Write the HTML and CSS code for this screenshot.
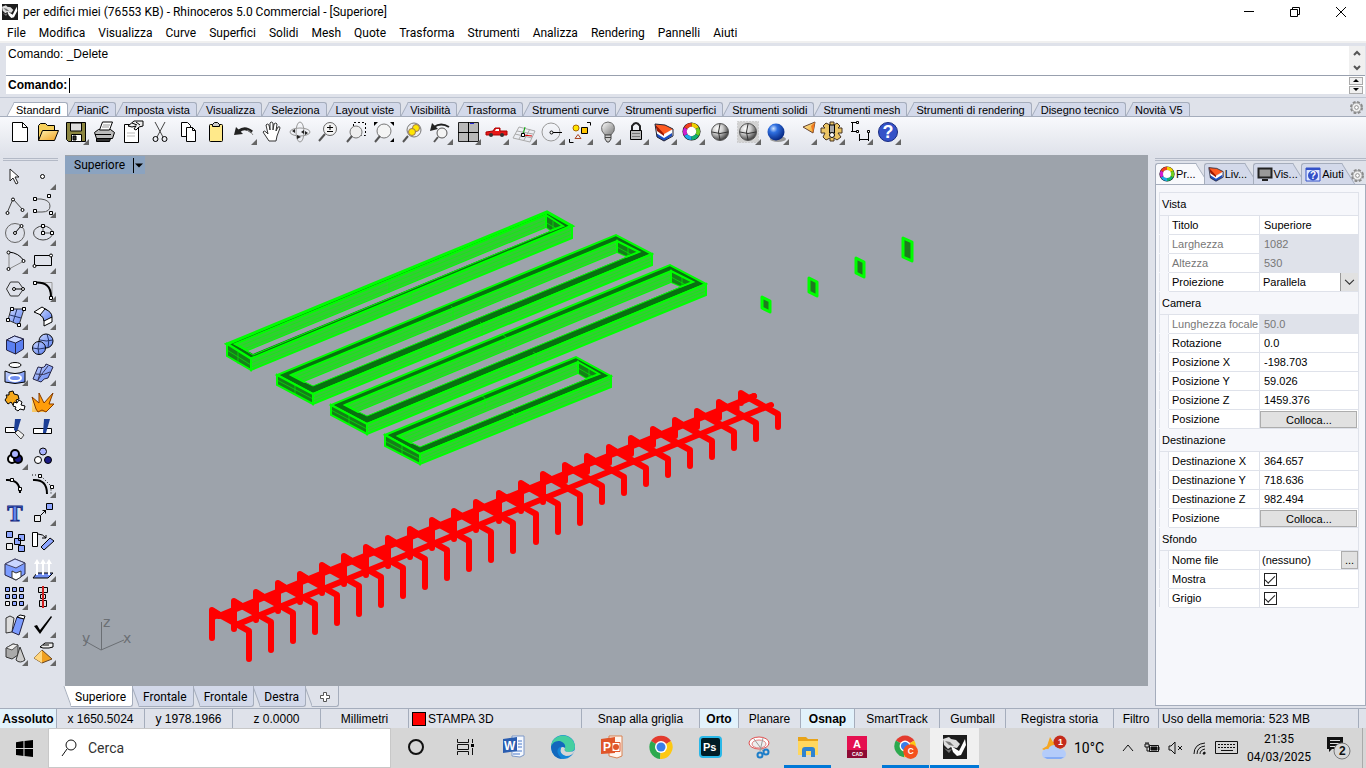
FILE: index.html
```html
<!DOCTYPE html>
<html lang="it">
<head>
    <meta charset="UTF-8">
    <meta name="viewport" content="width=device-width, initial-scale=1.0">
    <title>per edifici miei (76553 KB) - Rhinoceros 5.0 Commercial - [Superiore]</title>
    <link rel="stylesheet" href="styles.css">
</head>
<body>
    <!-- Shared gradients and symbols -->
    <svg class="defs" width="0" height="0" aria-hidden="true">
        <defs>
            <linearGradient id="gold" x1="0" y1="0" x2="1" y2="1"><stop offset="0" stop-color="#fff3b0"/><stop offset="1" stop-color="#f0a020"/></linearGradient>
            <linearGradient id="blue" x1="0" y1="0" x2="1" y2="1"><stop offset="0" stop-color="#c9d6ff"/><stop offset="1" stop-color="#5b7ff0"/></linearGradient>
            <linearGradient id="grey" x1="0" y1="0" x2="1" y2="1"><stop offset="0" stop-color="#fff"/><stop offset="1" stop-color="#777"/></linearGradient>
            <radialGradient id="ballGrey" cx=".35" cy=".3" r=".8"><stop offset="0" stop-color="#fff"/><stop offset=".4" stop-color="#ccc"/><stop offset="1" stop-color="#222"/></radialGradient>
            <radialGradient id="ballBlue" cx=".35" cy=".3" r=".8"><stop offset="0" stop-color="#cfe4ff"/><stop offset=".3" stop-color="#2f6fe0"/><stop offset="1" stop-color="#001a70"/></radialGradient>
            <symbol id="wheel" viewBox="0 0 20 20">
                <circle cx="10" cy="10" r="9.500" fill="#111" stroke="none"/>
                <g fill="none" stroke-width="4">
                    <path d="M10 3a7 7 0 0 1 6 3.500" stroke="#f0d000"/><path d="M16 6.500a7 7 0 0 1 0 7" stroke="#70d020"/>
                    <path d="M16 13.500a7 7 0 0 1-6 3.500" stroke="#10b070"/><path d="M10 17a7 7 0 0 1-6-3.500" stroke="#20a8e8"/>
                    <path d="M4 13.500a7 7 0 0 1 0-7" stroke="#d020d0"/><path d="M4 6.500A7 7 0 0 1 10 3" stroke="#f04020"/>
                </g>
                <circle cx="10" cy="10" r="5" fill="#fff" stroke="none"/>
            </symbol>
            <symbol id="layers" viewBox="0 0 20 20">
                <path d="M2 9l8 5 8-5v5l-8 5-7-4z" fill="#1e4fc0" stroke="none"/>
                <path d="M2 7l8 6 8-5v3l-8 5-8-5z" fill="#fff" stroke="none"/>
                <path d="M1 2l9 8v4L3 9z" fill="#a01800" stroke="none"/>
                <path d="M1 2l10 1 8 4-9 5z" fill="#ff5a20" stroke="none"/>
                <path d="M1 2l10 1 8 4v7l-9 5-7-4z" fill="none" stroke="#223"/>
            </symbol>
            <symbol id="rhino" viewBox="0 0 24 24">
                <path d="M0 0h24v24H0z" fill="#1c1c1c" stroke="none"/>
                <path d="M0 4l6-2 2 2 5 1 4 4-3 4-6-1-3 2-4-4z" fill="#ddd" stroke="none"/>
                <path d="M2 6l5 1 4 4-5-1zM1 13l4 2 4-1-3 4z" fill="#777" stroke="none"/>
                <path d="M8 11l8 5 6-12 1 6-5 10-4 1-4-4z" fill="#fff" stroke="none"/>
            </symbol>
            <symbol id="gear" viewBox="0 0 16 16">
                <circle cx="8" cy="8" r="6" fill="none" stroke="#8b8b8b" stroke-width="2" stroke-dasharray="3 1.700"/>
                <circle cx="8" cy="8" r="5" fill="#eee" stroke="#8b8b8b"/><circle cx="8" cy="8" r="2" fill="#fff" stroke="#8b8b8b"/>
            </symbol>
        </defs>
    </svg>

    <div class="app">
        <header class="titlebar">
            <svg class="app-icon" viewBox="0 0 24 24"><use href="#rhino"/></svg>
            <h1>per edifici miei (76553 KB) - Rhinoceros 5.0 Commercial - [Superiore]</h1>
            <div class="window-buttons">
                <button aria-label="Riduci a icona"><svg viewBox="0 0 12 12"><path d="M1 5.500h10"/></svg></button>
                <button aria-label="Ripristina"><svg viewBox="0 0 12 12"><path d="M1.500 3.500h7v7h-7zM3.500 3.500v-2h7v7h-2"/></svg></button>
                <button aria-label="Chiudi"><svg viewBox="0 0 12 12"><path d="M1 1l10 10M11 1L1 11"/></svg></button>
            </div>
        </header>

        <nav class="menubar">
            <a href="#">File</a><a href="#">Modifica</a><a href="#">Visualizza</a><a href="#">Curve</a><a href="#">Superfici</a><a href="#">Solidi</a><a href="#">Mesh</a><a href="#">Quote</a><a href="#">Trasforma</a><a href="#">Strumenti</a><a href="#">Analizza</a><a href="#">Rendering</a><a href="#">Pannelli</a><a href="#">Aiuti</a>
        </nav>

        <section class="command">
            <div class="history">
                <span>Comando: _Delete</span>
                <div class="scroll"><svg viewBox="0 0 8 6"><path d="M1 5l3-3 3 3"/></svg><svg viewBox="0 0 8 6"><path d="M1 1l3 3 3-3"/></svg></div>
            </div>
            <div class="prompt">
                <label for="cmd">Comando:</label>
                <input id="cmd" type="text">
                <div class="spin"><button aria-label="Su"><svg viewBox="0 0 6 3"><path d="M0 3l3-3 3 3z"/></svg></button><button aria-label="Giù"><svg viewBox="0 0 6 3"><path d="M0 0l3 3 3-3z"/></svg></button></div>
            </div>
        </section>

        <div class="tabs">
            <button class="tab active">Standard</button><button class="tab">PianiC</button><button class="tab">Imposta vista</button><button class="tab">Visualizza</button><button class="tab">Seleziona</button><button class="tab">Layout viste</button><button class="tab">Visibilità</button><button class="tab">Trasforma</button><button class="tab">Strumenti curve</button><button class="tab">Strumenti superfici</button><button class="tab">Strumenti solidi</button><button class="tab">Strumenti mesh</button><button class="tab">Strumenti di rendering</button><button class="tab">Disegno tecnico</button><button class="tab">Novità V5</button>
            <svg class="gear" viewBox="0 0 16 16"><use href="#gear"/></svg>
        </div>

        <div class="toolbar">
            <button class="tool" aria-label="Nuovo"><svg viewBox="0 0 28 28"><path d="M6.500 4.500h10l5 5v14h-15z" fill="#fff"/><path d="M16.500 4.500v5h5"/></svg></button>
            <button class="tool" aria-label="Apri"><svg viewBox="0 0 28 28"><path d="M4.500 22.500v-15l2-2h5l2 2h7v5" fill="#f6cf5a"/><path d="M4.500 22.500l4-10h16l-4 10z" fill="url(#gold)"/></svg></button>
            <button class="tool more" aria-label="Salva"><svg viewBox="0 0 28 28"><path d="M4.500 4.500h19v19h-17l-2-2z" fill="#8c8640"/><path d="M8.500 5h11v8h-11z" fill="#ddd"/><path d="M9.500 16.500h10v7h-10z" fill="#fff"/><path d="M11 18h3v4h-3z" fill="#333"/></svg></button>
            <button class="tool" aria-label="Stampa"><svg viewBox="0 0 28 28"><path d="M4.500 14.500l4-3h12l4 3-2 6h-16z" fill="#bbb"/><path d="M9.500 12l3-8h10l-3 8z" fill="#fff"/><path d="M13 7h7M12 9h7" stroke="#999"/><path d="M5 16.500h16"/><path d="M6.500 20.500h14l-1 3h-13z" fill="#333"/></svg></button>
            <button class="tool" aria-label="Proprietà documento"><svg viewBox="0 0 28 28"><path d="M6.500 6.500h14v18h-14z" fill="#fff"/><path d="M9 15h8M9 18h8" stroke="#bbb"/><path d="M10 8l6-5h9v5l-4 1-3 3-2-1 2-3-4 1z" fill="#eee"/><path d="M14 5l5 2M18 4l4 3"/></svg></button>
            <button class="tool" aria-label="Taglia"><svg viewBox="0 0 28 28"><path d="M9 4l8 15M19 4l-8 15" stroke="#444"/><circle cx="9.500" cy="21" r="2.500"/><circle cx="18.500" cy="21" r="2.500"/></svg></button>
            <button class="tool" aria-label="Copia"><svg viewBox="0 0 28 28"><path d="M7.500 4.500h6l3 3v11h-9z" fill="#fff"/><path d="M12.500 9.500h6l3 3v11h-9z" fill="#fff"/><path d="M18.500 9.500v3h3"/></svg></button>
            <button class="tool" aria-label="Incolla"><svg viewBox="0 0 28 28"><rect x="7.500" y="6.500" width="13" height="17" rx="1" fill="#ffe98a"/><path d="M10.500 8.500v-2l2-2h3l2 2v2z" fill="#ccc"/></svg></button>
            <button class="tool more" aria-label="Annulla"><svg viewBox="0 0 28 28"><path d="M9 13q6-5 13 1" stroke="#222" stroke-width="3"/><path d="M4 17l2-8 7 7z" fill="#222" stroke="none"/><path d="M17 12q4 1 6 5" stroke="#888"/></svg></button>
            <button class="tool" aria-label="Panoramica"><svg viewBox="0 0 28 28"><path d="M11 23l-6-9q1-2 3 0l2 2-2-9q1-2 3 0l1 5V5q1-2 3 0v7l1-6q2-2 3 0l-1 7 2-4q2-1 2 1l-3 8-1 5z" fill="#fff" stroke="#333"/></svg></button>
            <button class="tool" aria-label="Ruota vista"><svg viewBox="0 0 28 28"><ellipse cx="14" cy="14" rx="10" ry="4" stroke="#999"/><ellipse cx="14" cy="14" rx="4" ry="10" stroke="#999"/><path d="M6 13l3-2v4zM22 15l-3-2v4zM15 14l3-2v4zM11 17l4 2-4 2z" fill="#222" stroke="none"/></svg></button>
            <button class="tool" aria-label="Zoom dinamico"><svg viewBox="0 0 28 28"><circle cx="16" cy="11" r="6.500" fill="#f4f4f4" stroke="#666"/><path d="M13 9.500h6M16 7v5M13 13.500h6"/><path d="M11 16l-6 7" stroke="#555" stroke-width="2"/></svg></button>
            <button class="tool" aria-label="Zoom finestra"><svg viewBox="0 0 28 28"><path d="M11.500 8V4.500h12v13h-4" stroke-dasharray="2 2"/><circle cx="14" cy="14" r="6" fill="#eee" stroke="#777"/><path d="M10 18l-5 6" stroke="#555" stroke-width="2"/></svg></button>
            <button class="tool" aria-label="Zoom estensioni"><svg viewBox="0 0 28 28"><circle cx="14" cy="13" r="7" fill="#f4f4f4" stroke="#777"/><path d="M10 18l-5 6" stroke="#555" stroke-width="2"/><path d="M4 4h4l-4 4zM24 4v4l-4-4zM24 24h-4l4-4z" fill="#000" stroke="none"/></svg></button>
            <button class="tool" aria-label="Zoom selezionati"><svg viewBox="0 0 28 28"><circle cx="16" cy="12" r="7" fill="#eee" stroke="#777"/><circle cx="18" cy="10" r="3.500" fill="#ffe600" stroke="#975"/><circle cx="14" cy="14" r="3.500" fill="#ffe600" stroke="#975"/><path d="M10 18l-5 6" stroke="#555" stroke-width="2"/></svg></button>
            <button class="tool more" aria-label="Annulla vista"><svg viewBox="0 0 28 28"><path d="M8 9q7-5 15 0" stroke="#222" stroke-width="2"/><path d="M4 13l2-8 6 6z" fill="#222" stroke="none"/><circle cx="16" cy="15" r="5" fill="#f4f4f4" stroke="#555"/><path d="M12 19l-4 5" stroke="#555" stroke-width="2"/></svg></button>
            <button class="tool more" aria-label="Viste"><svg viewBox="0 0 28 28"><path d="M4.500 4.500h20v19h-20z" fill="#b8b8b8" stroke="#222"/><path d="M14.500 4v20M4 14.500h20"/><path d="M16 5.500h4" stroke="#22c"/></svg></button>
            <button class="tool more" aria-label="Auto"><svg viewBox="0 0 28 28"><path d="M4 14l7-1 2-3h5v3h7v4H4z" fill="#e81818" stroke="#a00"/><path d="M13 13l1-2h3v2z" fill="#fff" stroke="none"/><circle cx="9" cy="17" r="2" fill="#333" stroke="none"/><circle cx="20" cy="17" r="2" fill="#333" stroke="none"/></svg></button>
            <button class="tool more" aria-label="Piano di costruzione"><svg viewBox="0 0 28 28"><path d="M3 20L9 9l16 4-5 11zM5 16l17 4M7 13l16 3M9 21l6-11M14 22l6-11" stroke="#aaa"/><path d="M13 17l2-8" stroke="#0a0"/><path d="M13 17l9 1" stroke="#d00"/><path d="M11.500 15.500h3v3h-3z" fill="#fff"/></svg></button>
            <button class="tool more" aria-label="Cerchio"><svg viewBox="0 0 28 28"><circle cx="13" cy="14" r="9" stroke="#999"/><path d="M14 14.500h10"/><circle cx="13.500" cy="14.500" r="1.500" fill="#fff"/></svg></button>
            <button class="tool more" aria-label="Oggetti selezionati"><svg viewBox="0 0 28 28"><path d="M21 4.500h3.500v3M3.500 21v3.500h4"/><circle cx="10" cy="10" r="3" fill="#ffe600" stroke="#a60"/><path d="M15.500 9.500h6v6h-6z" fill="#ffc400"/><path d="M9 20.500l3-4 3 4z" stroke="#a42"/></svg></button>
            <button class="tool more" aria-label="Nascondi"><svg viewBox="0 0 28 28"><path d="M11 17l-3-4q-2-8 6-9 8 1 6 9l-3 4z" fill="url(#grey)" stroke="#666"/><path d="M11 17h6v4l-2 3h-2l-2-3z" fill="#ccc" stroke="#444"/><path d="M11 19.500h6" stroke="#444"/></svg></button>
            <button class="tool more" aria-label="Blocca"><svg viewBox="0 0 28 28"><path d="M10 13V8q4-6 8 0v5" stroke="#222" stroke-width="2"/><path d="M8.500 12.500h11v9h-11z" fill="#bbb"/><path d="M10 15.500h8M10 18.500h8" stroke="#777"/></svg></button>
            <button class="tool more" aria-label="Livelli"><svg viewBox="0 0 28 28"><use href="#layers" x="4" y="4" width="20" height="20"/></svg></button>
            <button class="tool more" aria-label="Proprietà"><svg viewBox="0 0 28 28"><use href="#wheel" x="4" y="4" width="19" height="19"/></svg></button>
            <button class="tool" aria-label="Ombreggia"><svg viewBox="0 0 28 28"><circle cx="14" cy="14" r="8.500" fill="url(#ballGrey)" stroke="#555"/><path d="M14 6q-3 8 0 16M6 14q8 3 16 0" stroke="#333"/></svg></button>
            <button class="tool more" aria-label="Ombreggia selezionati"><svg viewBox="0 0 28 28"><path d="M3.500 3.500h21v21h-21z" fill="#d2d2d2" stroke="#bbb" stroke-dasharray="1 2"/><circle cx="14" cy="14" r="8.500" fill="url(#ballGrey)" stroke="#555"/><path d="M14 6q-3 8 0 16M6 14q8 3 16 0" stroke="#333"/></svg></button>
            <button class="tool more" aria-label="Renderizza"><svg viewBox="0 0 28 28"><ellipse cx="16" cy="21" rx="8" ry="3" fill="#999" stroke="none"/><circle cx="14" cy="14" r="8.500" fill="url(#ballBlue)" stroke="none"/></svg></button>
            <button class="tool more" aria-label="Luci"><svg viewBox="0 0 28 28"><path d="M13 9l12-5-2 11z" fill="url(#gold)" stroke="#643"/><path d="M21 8l4-4-2 11z" fill="#f07a20" stroke="none"/></svg></button>
            <button class="tool more" aria-label="Opzioni"><svg viewBox="0 0 28 28"><path d="M12 4h4v3l3-2 3 3-2 2h4v5h-4l3 4-4 3-3-2v3h-4v-3l-4 2-3-3 2-4H3v-5h4L5 8l3-3 4 2z" fill="#ebc565" stroke="#432"/><path d="M11.500 7v8h5V7z" fill="#aaa"/><circle cx="14" cy="17" r="2.500" fill="#fff"/></svg></button>
            <button class="tool more" aria-label="Quote"><svg viewBox="0 0 28 28"><path d="M5 4.500h6M5 13.500h5M6.500 5v9M13.500 16v7M22.500 15v8M13 21.500h10"/><path d="M10.500 3.500h2v2h-2zM10.500 12.500h2v2h-2zM21.500 12.500h2v2h-2z" fill="#fff"/></svg></button>
            <button class="tool more" aria-label="Aiuti"><svg viewBox="0 0 28 28"><circle cx="14" cy="14" r="9.500" fill="#3452c8" stroke="#1a2c80"/><text x="14" y="20" class="help">?</text></svg></button>
        </div>

        <div class="workspace">
            <aside class="toolbox">
                <button class="tool" aria-label="Seleziona"><svg viewBox="0 0 28 28"><path d="M9 6v12l3-3 3 6 2-1-3-6h4z" fill="#fff" stroke="#222"/></svg></button>
                <button class="tool more" aria-label="Punto"><svg viewBox="0 0 28 28"><circle cx="13.500" cy="13.500" r="2" fill="#fff"/></svg></button>
                <button class="tool more" aria-label="Polilinea"><svg viewBox="0 0 28 28"><path d="M6 22L12 8l10 11" stroke="#444"/><circle cx="6.500" cy="22" r="1.500" fill="#fff"/><circle cx="12" cy="8.500" r="1.500" fill="#fff"/><circle cx="21.500" cy="19" r="1.500" fill="#fff"/></svg></button>
                <button class="tool more" aria-label="Curva"><svg viewBox="0 0 28 28"><path d="M7 8h5q9 1 9 7t-8 6H6" stroke="#555"/><path d="M4.500 6.500h3v3h-3zM18.500 3.500h3v3h-3zM4.500 18.500h3v3h-3zM20.500 20.500h3v3h-3z" fill="#fff"/></svg></button>
                <button class="tool more" aria-label="Cerchio"><svg viewBox="0 0 28 28"><circle cx="14" cy="14" r="9.500" stroke="#666"/><path d="M14 14l6-7"/><circle cx="14" cy="14" r="1.500" fill="#fff"/><circle cx="20.500" cy="7" r="1.500" fill="#fff"/></svg></button>
                <button class="tool more" aria-label="Ellisse"><svg viewBox="0 0 28 28"><ellipse cx="14" cy="14" rx="9.500" ry="7" stroke="#444"/><path d="M14 14V7M14 14h9" stroke="#555"/><path d="M12.500 5.500h3v3h-3zM12.500 12.500h3v3h-3zM21.500 12.500h3v3h-3z" fill="#fff"/></svg></button>
                <button class="tool more" aria-label="Arco"><svg viewBox="0 0 28 28"><path d="M8 5v17l15-8" stroke="#888"/><path d="M8 5q10 1 15 9"/><circle cx="7.500" cy="5.500" r="1.500" fill="#fff"/><circle cx="7.500" cy="22" r="1.500" fill="#fff"/><circle cx="22.500" cy="14" r="1.500" fill="#fff"/></svg></button>
                <button class="tool more" aria-label="Rettangolo"><svg viewBox="0 0 28 28"><path d="M5.500 8.500h17v10h-17z"/><circle cx="5.500" cy="19" r="1.500" fill="#fff"/><circle cx="22" cy="8.500" r="1.500" fill="#fff"/></svg></button>
                <button class="tool more" aria-label="Poligono"><svg viewBox="0 0 28 28"><path d="M9.500 7h8l5 7-5 7h-8l-4-7z" stroke="#333"/><path d="M13 14h9"/><circle cx="13" cy="14" r="1.500" fill="#fff"/><circle cx="22" cy="14" r="1.500" fill="#fff"/></svg></button>
                <button class="tool more" aria-label="Raccorda"><svg viewBox="0 0 28 28"><path d="M6 7.500h17v15" stroke="#999"/><path d="M6 7.500q16-1 16 14" stroke-width="2"/><path d="M4.500 6.500h3v3h-3zM20.500 21.500h3v3h-3z" fill="#fff"/></svg></button>
                <button class="tool more" aria-label="Superficie da punti"><svg viewBox="0 0 28 28"><path d="M10 6h13l-5 16-11-5z" fill="url(#blue)" stroke="#333"/><path d="M16 6l-4 13M9 12l11 3" stroke="#236"/><path d="M9.500 4.500h3v3h-3zM21.500 4.500h3v3h-3zM5.500 15.500h3v3h-3zM16.500 20.500h3v3h-3z" fill="#fff"/></svg></button>
                <button class="tool more" aria-label="Sfumatura superficie"><svg viewBox="0 0 28 28"><path d="M5 9l8-5 5 3-6 5z" fill="#fff"/><path d="M15 15v8l8-4v-5z" fill="#fff"/><path d="M11 12l5-6q7 3 7 8l-8 4q0-4-4-6z" fill="url(#blue)"/></svg></button>
                <button class="tool more" aria-label="Parallelepipedo"><svg viewBox="0 0 28 28"><path d="M5.500 9l8-4 9 3v10l-8 5-9-4z" fill="#5b7ff0" stroke="#224"/><path d="M5.500 9l8-4 9 3-8 4z" fill="#c9d6ff" stroke="#224"/><path d="M14.500 12v11" stroke="#224"/></svg></button>
                <button class="tool more" aria-label="Booleane"><svg viewBox="0 0 28 28"><circle cx="17" cy="10" r="7" fill="url(#blue)"/><circle cx="10" cy="17" r="6.500" fill="url(#blue)"/><path d="M4 17q6 2 12 0M10 11q-2 6 0 12M18 3q3 6 1 14M11 9q6 2 13 0" stroke="#236"/></svg></button>
                <button class="tool more" aria-label="Curve da oggetti"><svg viewBox="0 0 28 28"><ellipse cx="14" cy="6" rx="6" ry="2.500" fill="#fff"/><path d="M4 12q10 5 20 0v11q-10 3-20 0z" fill="url(#blue)"/><ellipse cx="14" cy="19" rx="6" ry="3" fill="#6f8df0" stroke="#fff" stroke-width="2"/></svg></button>
                <button class="tool more" aria-label="Mesh"><svg viewBox="0 0 28 28"><path d="M4 20l5-12q7 2 8-3l7 3-5 11q-4 0-7 4z" fill="url(#blue)" stroke="#224"/><path d="M7 15q8 2 14-2M9 21q5-8 10-14M13 8l-4 13" stroke="#335"/></svg></button>
                <button class="tool" aria-label="Unisci"><svg viewBox="0 0 28 28"><path d="M5 8h3V5l4-1 1 3 4 1 1 4-3 1 1 4-4 1-2-3-3 2-3-4 2-3z" fill="#f5a81c"/><path d="M13 15l3 1 2-3 3 2-1 3 4 1-1 4-4-1-2 2-3-2 1-2-3-1z" fill="#fff"/></svg></button>
                <button class="tool" aria-label="Esplodi"><svg viewBox="0 0 28 28"><path d="M3 25V10l7 6V6l5 10 9-10-4 11h5l-8 8z" fill="url(#gold)" stroke="none"/><path d="M3 10l7 6V6l5 10 9-10-4 11h5l-8 8-4-2-4 2-2-3z" fill="#ff9d0a" stroke="#843a00"/></svg></button>
                <button class="tool" aria-label="Tronca"><svg viewBox="0 0 28 28"><path d="M4.500 12.500h10v5h-10z" fill="#fff"/><path d="M14 4h6l-4 13-3-2z" fill="#1c3f96" stroke="none"/><path d="M17 15l6 5-3 4-6-6z" fill="#eee" stroke="#444"/></svg></button>
                <button class="tool" aria-label="Suddividi"><svg viewBox="0 0 28 28"><path d="M4.500 13.500h18v5h-18z" fill="#fff"/><path d="M15 4h6l-4 14h-3z" fill="#1c3f96" stroke="none"/></svg></button>
                <button class="tool more" aria-label="Raggruppa"><svg viewBox="0 0 28 28"><g stroke-width="2"><circle cx="11" cy="16" r="4" fill="#fff"/><circle cx="17" cy="16" r="4" fill="#1c1c86"/><circle cx="14" cy="11" r="4" fill="#aab4ff"/></g></svg></button>
                <button class="tool" aria-label="Separa"><svg viewBox="0 0 28 28"><circle cx="14" cy="8.500" r="3.500" fill="#aab4ff"/><circle cx="9" cy="17" r="3.500" fill="#fff"/><circle cx="19" cy="17" r="3.500" fill="#1c1c86"/></svg></button>
                <button class="tool" aria-label="Modifica punti"><svg viewBox="0 0 28 28"><path d="M5 9q14-1 14 13" stroke-width="2"/><path d="M9.500 7.500h3v3h-3zM17.500 16.500h3v3h-3z" fill="#fff"/></svg></button>
                <button class="tool more" aria-label="Punti di controllo"><svg viewBox="0 0 28 28"><path d="M4 9q14-1 14 14" stroke-width="2"/><path d="M3 4h8l11 11v9" stroke-dasharray="1 2"/><path d="M9.500 3.500h3v3h-3zM21.500 14.500h3v3h-3z" fill="#fff"/></svg></button>
                <button class="tool" aria-label="Testo"><svg viewBox="0 0 28 28"><text x="14" y="22" class="tee">T</text></svg></button>
                <button class="tool more" aria-label="Sposta"><svg viewBox="0 0 28 28"><path d="M5.500 16.500h6v6h-6z" fill="#eee"/><path d="M17.500 4.500h6v6h-6z" fill="#8ea6ff"/><path d="M12 16l5-5M13.500 11.500h3v3"/></svg></button>
                <button class="tool" aria-label="Copia oggetti"><svg viewBox="0 0 28 28"><path d="M5.500 16.500h6v6h-6z" fill="#eee"/><path d="M5.500 4.500h6v6h-6zM17.500 7.500h6v6h-6zM13.500 11.500h6v6h-6zM17.500 18.500h6v6h-6z" fill="#8ea6ff"/></svg></button>
                <button class="tool" aria-label="Ruota"><svg viewBox="0 0 28 28"><path d="M3.500 5.500h5v14h-5z" fill="#fff"/><path d="M12 20l9-9 4 3-10 9z" fill="#8ea6ff"/><path d="M9 7q5 0 8 4M13 11h4V8"/></svg></button>
                <button class="tool more" aria-label="Solidi"><svg viewBox="0 0 28 28"><path d="M4 9l10-5 10 4v11l-9 6-11-5z" fill="#7c9cff" stroke="#224"/><path d="M4 9l10-5 10 4-9 5z" fill="#c9d6ff" stroke="#446"/><path d="M11 16l4 2 5-2v6l-5 3-4-2z" fill="#fff" stroke="#333"/></svg></button>
                <button class="tool more" aria-label="Proietta"><svg viewBox="0 0 28 28"><path d="M4 23l4-5h16l-5 5z" fill="#6f8df0"/><path d="M8 20V7M14 20V7M20 20V7" stroke="#fff" stroke-width="2"/><path d="M5 9l3-5 3 5zM11 9l3-5 3 5zM17 9l3-5 3 5z" fill="#fff" stroke="none"/></svg></button>
                <button class="tool more" aria-label="Serie"><svg viewBox="0 0 28 28"><path d="M4.500 4.500h4v4h-4zM11.500 4.500h4v4h-4zM18.500 4.500h4v4h-4zM4.500 11.500h4v4h-4zM11.500 11.500h4v4h-4zM18.500 11.500h4v4h-4zM11.500 18.500h4v4h-4zM18.500 18.500h4v4h-4z" fill="#8ea6ff"/><path d="M4.500 18.500h4v4h-4z" fill="#eee"/></svg></button>
                <button class="tool more" aria-label="Allinea"><svg viewBox="0 0 28 28"><path d="M9.500 4.500h9v5h-9zM11.500 11.500h5v4h-5zM10.500 17.500h7v6h-7z" fill="#ddd"/><path d="M14 3v22" stroke="#d02020" stroke-width="2"/></svg></button>
                <button class="tool more" aria-label="Deforma"><svg viewBox="0 0 28 28"><path d="M5 7l4-2 4 2-2 14-6 1z" fill="#ddd" stroke="#333"/><path d="M11 21l5-15 7 2-5 16z" fill="#7c9cff" stroke="#224"/><path d="M16 6l3-2 5 1-1 3z" fill="#fff"/></svg></button>
                <button class="tool more" aria-label="Verifica"><svg viewBox="0 0 28 28"><path d="M5 15l3-1 3 5L22 5l1 1-12 17z" fill="#000" stroke="none"/></svg></button>
                <button class="tool more" aria-label="Blocchi"><svg viewBox="0 0 28 28"><path d="M5 9l7-4 5 1v10l-6 4-6-2z" fill="#aaa" stroke="#333"/><path d="M5 9l7-4 5 1-6 5z" fill="#eee" stroke="#555"/><path d="M19 8l5 13q-5 4-9 0z" fill="#ccc" stroke="#333"/></svg></button>
                <button class="tool more" aria-label="Renderizza oggetto"><svg viewBox="0 0 28 28"><path d="M13 11l10 9-10 4-8-5z" fill="#f0a020" stroke="#642"/><path d="M13 11v13l-8-5z" fill="#ffd780" stroke="none"/><path d="M11 8l5-4h8v4l-4 1h-6z" fill="#eee"/><path d="M14 6h6"/></svg></button>
            </aside>

            <main class="viewport">
                <svg class="scene" viewBox="65 155 1083 531" preserveAspectRatio="xMinYMin meet" role="img" aria-label="Vista superiore">
                    <defs>
                        <g id="frameLong"><path d="M212 638V610l8 5 29 16v28"/><path class="knot" d="M212 609l19 11v-9l-19 8z"/></g>
                        <g id="frameShort"><path d="M212 626V610l8 5 29 16v16"/><path class="knot" d="M212 609l19 11v-9l-19 8z"/></g>
                        <g id="beam">
                            <path class="top" d="M277 375l36 19 339-140-36-19z"/>
                            <path class="side" d="M313 394l339-140v11L313 404z"/>
                            <path class="end" d="M277 375l36 19v10l-36-19z"/>
                            <path class="line" d="M313 398l339-140M313 401l339-140M277 380l36 19M295 385v10"/>
                            <path class="side" d="M291 375l326-134v12L304 382z"/>
                            <path class="end" d="M617 241l22 11-13 5-9-4z"/>
                            <path class="hole" d="M304 382l9 4 313-129-9-4z"/>
                            <path class="line" d="M296 377l321-132M300 379l317-130M617 247l15 8M628 246v11"/>
                            <path class="rim" d="M291 375l22 11 326-134-22-11z"/>
                        </g>
                    </defs>
                    <g class="green">
                        <path class="top thin" d="M227 344l24 15 321-133-25-14z"/>
                        <path class="side" d="M251 359l321-133v12L251 370z"/>
                        <path class="end" d="M227 344l24 15v11l-24-14z"/>
                        <path class="line" d="M251 363l321-133M251 367l321-133M227 350l24 15M238 352v12"/>
                        <path class="side" d="M235 344l311-129v13L248 351z"/>
                        <path class="end" d="M546 215l17 11-13 5-4-3z"/>
                        <path class="hole" d="M248 351l5 3 297-123-4-3z"/>
                        <path class="line" d="M240 346l305-126M244 349l301-125M389 281v12M411 292v12M545 222l12 7M553 221v10"/>
                        <path class="rim" d="M235 344l18 11 310-129-17-11z"/>
                        <use href="#beam"/><path class="line" d="M451 306l2 2v10M480 322l2 2v12"/>
                        <use href="#beam" x="54" y="30"/><path class="line" d="M503 335l3 2v10M533 352l3 2v11"/>
                        <path class="top" d="M385 435l35 19 191-78-35-19z"/>
                        <path class="side" d="M420 454l191-78v11l-191 77z"/>
                        <path class="end" d="M385 435l35 19v10l-35-18z"/>
                        <path class="line" d="M420 458l191-79M420 461l191-78M385 441l35 18M402 445v11"/>
                        <path class="side" d="M398 436l180-74v12l-167 69z"/>
                        <path class="end" d="M578 362l21 12-13 5-8-5z"/>
                        <path class="hole" d="M411 443l9 4 166-68-8-5z"/>
                        <path class="line" d="M403 438l175-72M407 440l171-70M578 368l14 8M589 369v9M482 396l3 2v11M512 412l3 2v11"/>
                        <path class="rim" d="M398 436l22 11 179-73-21-12z"/>
                        <path class="chip" d="M762 297l8 4v11l-8-4zM809 278l8 4v14l-8-4zM856 258l8 4v15l-8-4zM903 238l9 4v19l-9-4z"/>
                    </g>
                    <g class="red">
                        <path d="M219 616L754 396M236 625l535-220"/>
                        <use href="#frameLong"/>
                        <use href="#frameLong" x="22" y="-9"/><use href="#frameLong" x="44" y="-18"/><use href="#frameLong" x="66" y="-27"/>
                        <use href="#frameLong" x="88" y="-36"/><use href="#frameLong" x="110" y="-45"/><use href="#frameLong" x="132" y="-54"/>
                        <use href="#frameLong" x="154" y="-63"/><use href="#frameLong" x="176" y="-72"/><use href="#frameLong" x="198" y="-81"/>
                        <use href="#frameLong" x="220" y="-90"/><use href="#frameLong" x="242" y="-99"/><use href="#frameLong" x="264" y="-108"/>
                        <use href="#frameLong" x="287" y="-117"/><use href="#frameLong" x="309" y="-127"/><use href="#frameLong" x="331" y="-136"/>
                        <use href="#frameShort" x="353" y="-145"/><use href="#frameShort" x="375" y="-154"/><use href="#frameShort" x="397" y="-163"/>
                        <use href="#frameShort" x="419" y="-172"/><use href="#frameShort" x="441" y="-181"/><use href="#frameShort" x="463" y="-190"/>
                        <use href="#frameShort" x="485" y="-199"/><use href="#frameShort" x="507" y="-208"/><path d="M741 403v-10l8 5 29 16v13M741 402l13-6"/>
                    </g>
                    <g class="axes">
                        <path d="M101.500 622v28M101 650l-18-10M101 650l23-10"/>
                        <text x="103" y="627">z</text><text x="123" y="643">x</text><text x="82" y="643">y</text>
                    </g>
                </svg>
                <button class="view-title"><span>Superiore</span><svg viewBox="0 0 8 4"><path d="M0 0h8L4 4z"/></svg></button>
            </main>

            <aside class="dock">
                <div class="dock-tabs">
                    <button class="dock-tab active"><svg viewBox="0 0 20 20"><use href="#wheel"/></svg>Pr...</button>
                    <button class="dock-tab"><svg viewBox="0 0 20 20"><use href="#layers"/></svg>Liv...</button>
                    <button class="dock-tab"><svg viewBox="0 0 16 16"><path d="M1.500 2.500h13v9h-13z" fill="#999" stroke="#222" stroke-width="2"/><path d="M5 14h6" stroke="#222" stroke-width="2"/></svg>Vis...</button>
                    <button class="dock-tab"><svg viewBox="0 0 16 16"><path d="M1 2h14v13H1z" fill="#dfe8ff" stroke="#3452c8"/><path d="M1 3h14" stroke="#3452c8" stroke-width="2"/><circle cx="8" cy="9.500" r="5" fill="#3452c8"/><text x="8" y="13" class="help small">?</text></svg>Aiuti</button>
                    <svg class="gear" viewBox="0 0 16 16"><use href="#gear"/></svg>
                </div>
                <div class="dock-body">
                    <table class="props">
                        <colgroup><col class="gutter"><col><col class="value"></colgroup>
                        <tbody>
                            <tr><th colspan="3" class="group">Vista</th></tr>
                            <tr><td></td><th><label for="titolo">Titolo</label></th><td><input id="titolo" type="text" value="Superiore"></td></tr>
                            <tr class="off"><td></td><th><label for="larg">Larghezza</label></th><td><input id="larg" type="text" value="1082" disabled></td></tr>
                            <tr class="off"><td></td><th><label for="alt">Altezza</label></th><td><input id="alt" type="text" value="530" disabled></td></tr>
                            <tr><td></td><th><label for="proj">Proiezione</label></th><td><div class="pick"><select id="proj"><option>Parallela</option></select><svg viewBox="0 0 10 10"><path d="M1 3l4 4 4-4"/></svg></div></td></tr>
                            <tr><th colspan="3" class="group">Camera</th></tr>
                            <tr class="off"><td></td><th><label for="foc">Lunghezza focale</label></th><td><input id="foc" type="text" value="50.0" disabled></td></tr>
                            <tr><td></td><th><label for="rot">Rotazione</label></th><td><input id="rot" type="text" value="0.0"></td></tr>
                            <tr><td></td><th><label for="px">Posizione X</label></th><td><input id="px" type="text" value="-198.703"></td></tr>
                            <tr><td></td><th><label for="py">Posizione Y</label></th><td><input id="py" type="text" value="59.026"></td></tr>
                            <tr><td></td><th><label for="pz">Posizione Z</label></th><td><input id="pz" type="text" value="1459.376"></td></tr>
                            <tr><td></td><th><label for="place1">Posizione</label></th><td><button id="place1" class="place">Colloca...</button></td></tr>
                            <tr><th colspan="3" class="group">Destinazione</th></tr>
                            <tr><td></td><th><label for="dx">Destinazione X</label></th><td><input id="dx" type="text" value="364.657"></td></tr>
                            <tr><td></td><th><label for="dy">Destinazione Y</label></th><td><input id="dy" type="text" value="718.636"></td></tr>
                            <tr><td></td><th><label for="dz">Destinazione Z</label></th><td><input id="dz" type="text" value="982.494"></td></tr>
                            <tr><td></td><th><label for="place2">Posizione</label></th><td><button id="place2" class="place">Colloca...</button></td></tr>
                            <tr><th colspan="3" class="group">Sfondo</th></tr>
                            <tr><td></td><th><label for="file">Nome file</label></th><td><div class="pick"><input id="file" type="text" value="(nessuno)"><button class="browse" aria-label="Sfoglia">...</button></div></td></tr>
                            <tr><td></td><th><label for="show">Mostra</label></th><td><input id="show" type="checkbox" checked></td></tr>
                            <tr><td></td><th><label for="bw">Grigio</label></th><td><input id="bw" type="checkbox" checked></td></tr>
                        </tbody>
                    </table>
                </div>
            </aside>

            <nav class="view-tabs">
                <button class="view-tab active">Superiore</button><button class="view-tab">Frontale</button><button class="view-tab">Frontale</button><button class="view-tab">Destra</button><button class="view-tab add" aria-label="Nuova vista"><svg viewBox="0 0 10 10"><path d="M3.500.5h3v3h3v3h-3v3h-3v-3h-3v-3h3z"/></svg></button>
            </nav>
        </div>

        <footer class="status">
            <button class="on">Assoluto</button><span>x 1650.5024</span><span>y 1978.1966</span><span>z 0.0000</span><button>Millimetri</button><button class="layer"><i class="swatch"></i>STAMPA 3D</button><button>Snap alla griglia</button><button class="on">Orto</button><button>Planare</button><button class="on">Osnap</button><button>SmartTrack</button><button>Gumball</button><button>Registra storia</button><button>Filtro</button><span class="memory">Uso della memoria: 523 MB</span>
        </footer>

        <div class="taskbar">
            <button class="start" aria-label="Start"><svg viewBox="0 0 16 16"><path d="M0 2l7-1v6.500H0zM8 1l8-1v7.500H8zM0 8.500h7V15l-7-1zM8 8.500h8V16l-8-1z"/></svg></button>
            <div class="search"><svg viewBox="0 0 16 18"><circle cx="10" cy="6" r="5"/><path d="M6 10l-5 7"/></svg><input type="search" placeholder="Cerca" aria-label="Cerca"></div>
            <div class="apps">
                <button aria-label="Cortana"><svg viewBox="0 0 24 24"><circle cx="12" cy="12" r="7" fill="none" stroke="#111" stroke-width="2"/></svg></button>
                <button aria-label="Visualizzazione attività"><svg viewBox="0 0 24 24"><path d="M4.500 4v3.500h11V4M4.500 20v-3.500h11V20M4.500 9.500h11v5h-11zM19.500 4v4M19.500 13v7" fill="none" stroke="#111"/><path d="M18 9h3v3h-3z"/></svg></button>
                <button aria-label="Word"><svg viewBox="0 0 24 24"><path d="M10 1h12v19l-4 2-8-1z" fill="#f4f8ff" stroke="#7c98c8"/><path d="M16 6h4M16 9h4M16 12h4M11 16h9M11 19h7" stroke="#4a78c8"/><path d="M1 4l14-2v14L1 18z" fill="#2a5db0"/><text x="2" y="15" class="office">W</text></svg></button>
                <button aria-label="Edge"><svg viewBox="0 0 24 24"><circle cx="12" cy="12" r="12" fill="#1487d8"/><path d="M0 11C2-3 22-3 24 11q0 6-7 6-5-1-3-4c2-5-8-7-14-2z" fill="#45cfa0"/><path d="M0 12q2-7 9-6 6 2 5 7-2-2-5-1-6 4 2 12Q1 23 0 12z" fill="#1268bd"/><path d="M14 13q-2 4 4 4 4 0 6-2-2 6-9 6-7-2-5-8 1-2 4 0z" fill="#d6d6d6"/></svg></button>
                <button aria-label="PowerPoint"><svg viewBox="0 0 24 24"><path d="M9 1h13v20l-5 2-8-2z" fill="#fff5ee" stroke="#d88050"/><path d="M1 4l14-2v16L1 19z" fill="#e0562a"/><path d="M12 7.500h8v9h-8z" fill="#fff" stroke="#e0562a"/><circle cx="16" cy="12" r="3" fill="#e0562a"/><text x="3" y="16" class="office">P</text></svg></button>
                <button aria-label="Chrome"><svg viewBox="0 0 24 24"><path d="M12 12L2 6a12 12 0 0 1 20 0z" fill="#e33b2e"/><path d="M12 12L2 6a12 12 0 0 0 9 18z" fill="#2da94f"/><path d="M12 12L22 6a12 12 0 0 1-11 18z" fill="#fdc813"/><circle cx="12" cy="12" r="6" fill="#fff"/><circle cx="12" cy="12" r="4.500" fill="#3a7de8"/></svg></button>
                <button aria-label="Photoshop"><svg viewBox="0 0 24 24"><rect x="2" y="2" width="21" height="20" rx="3" fill="#001d26" stroke="#2ab8e8" stroke-width="2"/><text x="5" y="16" class="ps">Ps</text></svg></button>
                <button aria-label="Strumento di cattura"><svg viewBox="0 0 24 24"><ellipse cx="12" cy="8" rx="10" ry="6" fill="#fff" stroke="#e05050"/><ellipse cx="12" cy="9" rx="7" ry="4" fill="#eee" stroke="#e08080"/><path d="M7 4l9 12M16 3l-3 13" stroke="#999" fill="none"/><circle cx="13" cy="20" r="2.500" fill="none" stroke="#1d7dc8" stroke-width="2"/><circle cx="19" cy="17" r="2.500" fill="none" stroke="#1d7dc8" stroke-width="2"/></svg></button>
                <button class="running" aria-label="Esplora file"><svg viewBox="0 0 24 24"><path d="M2 2h8l2 2h10v7H2z" fill="#e8a318"/><path d="M2 6h20v14H2z" fill="#ffd75e"/><path d="M6 22v-7q0-3 3-3h7q3 0 3 3v7h-4v-6h-5v6z" fill="#2f83d0"/></svg></button>
                <button aria-label="AutoCAD"><svg viewBox="0 0 24 24"><path d="M2 1h20v16H2z" fill="#e51050"/><path d="M2 15h20v8H2z" fill="#8e0a34"/><text x="8" y="13" class="ac">A</text><text x="7" y="21" class="cad">CAD</text></svg></button>
                <button class="running" aria-label="Chrome profilo"><svg viewBox="0 0 26 26"><path d="M12 12L2 6a12 12 0 0 1 20 0z" fill="#e33b2e"/><path d="M12 12L2 6a12 12 0 0 0 9 18z" fill="#2da94f"/><path d="M12 12L22 6a12 12 0 0 1-11 18z" fill="#fdc813"/><circle cx="12" cy="12" r="6" fill="#fff"/><circle cx="12" cy="12" r="4.500" fill="#3a7de8"/><circle cx="18" cy="18" r="8" fill="#f4511e"/><text x="15" y="21" class="badge">C</text></svg></button>
                <button class="running current" aria-label="Rhinoceros"><svg viewBox="0 0 24 24"><use href="#rhino"/></svg></button>
            </div>
            <div class="tray">
                <button class="weather"><svg viewBox="0 0 28 28"><path d="M10 3l3 5 6-2-1 6 4 3-14 3-6-3 5-3z" fill="#f5a623"/><g fill="#b4ccfa"><circle cx="7" cy="20" r="5"/><circle cx="14" cy="17" r="6"/><circle cx="21" cy="20" r="5"/><path d="M7 18h14v7H7z"/></g><path d="M4 23h20l-3 2H7z" fill="#86acf5"/><circle cx="20" cy="8" r="6.500" fill="#c42b1c"/><text x="18" y="11" class="badge">1</text></svg>10°C</button>
                <button aria-label="Mostra icone nascoste"><svg viewBox="0 0 16 16"><path d="M3 11l5-6 5 6"/></svg></button>
                <button aria-label="Batteria"><svg viewBox="0 0 16 16"><path d="M5.500 5.500h9v6h-9z"/><path d="M7 7h6v3H7z" fill="#111"/><path d="M15 7v3M1 4h4v3H1zM2 2v2M4 2v2M3 7v4h3"/></svg></button>
                <button aria-label="Volume"><svg viewBox="0 0 16 16"><path d="M1 6v4h2l4 4V2L3 6zM10 6l4 4M14 6l-4 4"/></svg></button>
                <button aria-label="Rete"><svg viewBox="0 0 16 16"><path d="M2 14Q2 4 13 3M5 14q0-7 8-8M8 14q0-4 5-5"/><path d="M11 14q0-2 2-2v2z" fill="#111"/></svg></button>
                <button class="keyboard" aria-label="Tastiera"><svg viewBox="0 0 24 14"><path d="M.5.5h22v12H.5z"/><path d="M3 3.500h18M3 6.500h18" stroke-dasharray="2 1"/><path d="M6 9.500h12"/></svg></button>
                <time class="clock"><span>21:35</span><span>04/03/2025</span></time>
                <button class="notify" aria-label="Notifiche"><svg viewBox="0 0 26 26"><path d="M1 2h16v12H6l-3 3v-3H1z" fill="#111" stroke="none"/><path d="M4 5.500h10M4 8.500h10M4 11.500h6" stroke="#ddd"/><circle cx="16" cy="16" r="8" fill="#d8d8d8" stroke="#777"/><text x="13" y="20" class="count">2</text></svg></button>
            </div>
        </div>
    </div>
</body>
</html>
```
FILE: styles.css
```css
* { box-sizing: border-box; }

body {
    margin: 0;
    background: #dfe2ea;
    color: #000;
    font-family: "Liberation Sans", Arial, sans-serif;
    font-size: 11px;
}

button, input, select { font: inherit; color: inherit; }
button { border: 0; padding: 0; margin: 0; background: none; cursor: pointer; }
a { color: inherit; text-decoration: none; }
svg { display: block; }
.defs { position: absolute; }

.app {
    display: grid;
    grid-template-rows: auto auto auto auto auto 1fr auto auto;
    min-height: 100vh;
}

/* Title and menus */
.titlebar {
    display: flex;
    align-items: center;
    height: 23px;
    padding-left: 2px;
    background: #fff;
    font-family: Roboto, "Noto Sans", sans-serif;
}

.titlebar h1 {
    flex: 1;
    margin: 0 0 0 5px;
    font-size: 12px;
    font-weight: 400;
}

.app-icon { width: 16px; height: 16px; }
.window-buttons { display: flex; margin-right: 2px; }
.window-buttons button { display: grid; place-items: center; width: 46px; height: 20px; }
.window-buttons svg { width: 12px; height: 12px; fill: none; stroke: #000; }

.menubar {
    display: flex;
    gap: 13px;
    height: 20px;
    padding: 0 7px;
    background: #fff;
    border-bottom: 2px solid #f0f0f0;
    font-family: Roboto, "Noto Sans", sans-serif;
    font-size: 12px;
    line-height: 20px;
}

/* Command area */
.command {
    margin-top: 3px;
    padding: 0 1px 3px 3px;
    border-bottom: 1px solid #bfc5d2;
}

.history, .prompt {
    display: flex;
    margin-left: 3px;
    padding-left: 2px;
    background: #fff;
    font-size: 12px;
}

.history { height: 30px; justify-content: space-between; border-bottom: 1px solid #98a0ae; line-height: 16px; }

.scroll {
    display: flex;
    flex-direction: column;
    justify-content: space-between;
    width: 16px;
    padding: 4px;
    background: #f0f0f0;
}

.scroll svg { width: 8px; height: 6px; fill: none; stroke: #555; stroke-width: 2; }
.prompt { height: 18px; align-items: center; }
.prompt label { font-weight: 700; }

.prompt input {
    flex: 1;
    height: 15px;
    margin-left: 2px;
    border: 0;
    border-left: 1px solid #000;
    outline: 0;
}

.spin { display: flex; flex-direction: column; gap: 1px; width: 16px; padding-right: 2px; }
.spin button { display: grid; place-items: center; height: 8px; background: #f0f0f0; border: 1px solid #aaa; }
.spin svg { width: 6px; height: 3px; }

/* Toolbar tabs */
.tabs {
    display: flex;
    align-items: flex-end;
    height: 19px;
    padding-left: 7px;
    border-bottom: 1px solid #a5adbc;
}

.tab {
    position: relative;
    height: 14px;
    margin-left: 7px;
    padding: 0 6px 0 2px;
    background: #d3d9ea;
    border: 1px solid #a5adbc;
    border-width: 1px 1px 0 0;
    border-radius: 0 3px 0 0;
    line-height: 14px;
    white-space: nowrap;
}

.tab::before {
    content: "";
    position: absolute;
    z-index: -1;
    top: -1px;
    bottom: 0;
    left: 0;
    width: 12px;
    background: inherit;
    border: 1px solid #a5adbc;
    border-width: 1px 0 0 1px;
    transform: skewX(-28deg);
    transform-origin: top left;
}

.tab.active, .tab.active::before { background: #fff; }
.gear { width: 15px; height: 15px; }
.tabs .gear { margin: 0 2px 1px auto; }
.tabs, .dock-tabs, .view-tabs { isolation: isolate; }

.toolbar {
    display: flex;
    height: 38px;
    padding: 1px 7px 0 6px;
    background: linear-gradient(#f8f9fc, #dfe2ea);
}

.tool { position: relative; width: 28px; height: 28px; }
.tool svg { width: 28px; height: 28px; fill: none; stroke: #000; }

/* Flyout corner */
.tool.more::after {
    content: "";
    position: absolute;
    right: 1px;
    bottom: 1px;
    border: 3px solid;
    border-color: transparent #666 #666 transparent;
}

.help { fill: #fff; stroke: none; font-size: 18px; font-weight: 700; text-anchor: middle; }
.help.small { font-size: 10px; }
.tee { fill: #6688f0; stroke: #152a80; font-family: "Liberation Serif", serif; font-size: 23px; font-weight: 700; text-anchor: middle; }

/* Work area */
.workspace {
    display: grid;
    grid-template-columns: 65px minmax(0, 1fr) 218px;
    grid-template-rows: 1fr 22px;
}

.toolbox {
    display: grid;
    grid-template-columns: 28px 28px;
    grid-row: 1 / 3;
    align-content: start;
    margin: 3px 7px 0 3px;
    padding-top: 2px;
    border-top: 3px double #b3b9c6;
}

.toolbox .tool { left: -2px; }
.viewport { position: relative; background: #9da3ab; min-height: 531px; }
.scene { position: absolute; inset: 0; width: 100%; height: 100%; }

.view-title {
    position: absolute;
    top: 1px;
    left: 0;
    display: flex;
    align-items: center;
    height: 18px;
    padding: 0 2px 0 9px;
    background: #8ba3c0;
    font-family: Roboto, "Noto Sans", sans-serif;
    font-size: 12px;
}

.view-title svg { width: 10px; height: 15px; margin-left: 8px; padding-left: 1px; border-left: 1px solid #000; }

.green { stroke: #0f0; stroke-width: 2; }
.top { fill: #087010; }
.top.thin { stroke-width: 3; }
.side { fill: #32cd32; }
.end { fill: #148018; }
.hole { fill: #9da3ab; stroke: none; }
.rim { fill: none; stroke-width: 1; }
.line { fill: none; stroke-width: 1; stroke-opacity: .6; }
.chip { fill: #1f7a1f; stroke-width: 3; stroke-linejoin: round; }
.red { fill: none; stroke: #f00; stroke-width: 6; stroke-linecap: round; stroke-linejoin: round; }
.knot { fill: #f00; stroke-width: 3; }
.axes { fill: none; stroke: #6b6f74; }
.axes text { fill: #6b6f74; stroke: none; font-family: "DejaVu Sans", sans-serif; font-size: 14px; }

/* Viewport tabs */
.view-tabs {
    display: flex;
    align-items: flex-start;
    grid-column: 2;
    font-family: Roboto, "Noto Sans", sans-serif;
    font-size: 12px;
}

.view-tab {
    position: relative;
    height: 21px;
    margin-left: 6px;
    padding: 2px 6px 0 4px;
    background: #d3d9ea;
    border: 1px solid #a5adbc;
    border-width: 0 1px 1px 0;
    border-radius: 0 0 3px 0;
}

.view-tab::before {
    content: "";
    position: absolute;
    z-index: -1;
    top: 0;
    bottom: -1px;
    left: 0;
    width: 12px;
    background: inherit;
    border: 1px solid #a5adbc;
    border-width: 0 0 1px 1px;
    transform: skewX(20deg);
    transform-origin: bottom left;
}

.view-tab.active, .view-tab.active::before { background: #fff; }
.view-tab.add { padding: 2px 8px 0; background: #dfe2ea; }
.view-tab.add svg { width: 10px; height: 10px; fill: #fff; stroke: #555; }

/* Properties dock */
.dock {
    display: flex;
    flex-direction: column;
    grid-column: 3;
    grid-row: 1 / 3;
    min-width: 0;
    margin: 3px 0 2px 7px;
    border-top: 3px double #b3b9c6;
}

.dock-tabs { display: flex; align-items: flex-end; height: 24px; border-bottom: 1px solid #a5adbc; }

.dock-tab {
    position: relative;
    display: flex;
    align-items: center;
    flex: 1;
    gap: 1px;
    min-width: 0;
    height: 21px;
    margin-right: 8px;
    padding-left: 3px;
    background: #d3d9ea;
    border: 1px solid #a5adbc;
    border-width: 1px 0 0 1px;
    border-radius: 3px 0 0 0;
    font-size: 11px;
    white-space: nowrap;
}

.dock-tab::after {
    content: "";
    position: absolute;
    z-index: -1;
    top: -1px;
    bottom: 0;
    right: 0;
    width: 14px;
    background: inherit;
    border: 1px solid #a5adbc;
    border-width: 1px 1px 0 0;
    transform: skewX(32deg);
    transform-origin: top right;
}

.dock-tab.active, .dock-tab.active::after { background: #f8f9fc; }
.dock-tab svg { width: 16px; height: 16px; flex: none; }
.dock-tabs .gear { flex: none; margin: 0 1px 1px 0; }

.dock-body {
    flex: 1;
    padding: 7px 6px 0 3px;
    background: #f6f7fb;
    border: 1px solid #a5adbc;
    border-top: 0;
}

.props { width: 100%; border-collapse: collapse; table-layout: fixed; background: #fff; }
.props .gutter { width: 9px; }
.props .value { width: 99px; }
.props td, .props th { height: 19px; padding: 0; border: 1px solid #dfe2ea; font-weight: 400; text-align: left; line-height: 16px; }
.props td:first-child { background: #f6f7fb; border-bottom-color: #f6f7fb; border-top-color: #f6f7fb; }
.props th { padding-left: 3px; white-space: nowrap; }
.props .group { height: 23px; padding-left: 2px; background: #f6f7fb; }
.props input[type="text"] { display: block; width: 100%; height: 18px; padding: 0 4px; border: 0; background: none; }
.props .off { color: #777; }
.props .off td:last-child { background: #dfe2ea; }

.props input[type="checkbox"] {
    display: grid;
    place-items: center;
    appearance: none;
    width: 13px;
    height: 13px;
    margin: 1px 4px;
    border: 1px solid #222;
    background: #fff;
}

.props input[type="checkbox"]:checked::before {
    content: "";
    width: 9px;
    height: 4px;
    margin-bottom: 2px;
    border: 1px solid #222;
    border-width: 0 0 1px 1px;
    transform: rotate(-45deg);
}

.pick { position: relative; display: flex; height: 18px; }
.pick select { appearance: none; width: 100%; padding: 0 3px; border: 0; background: none; }
.pick svg { position: absolute; top: 0; right: 0; width: 18px; height: 18px; padding: 3px; background: #e1e1e1; border-left: 1px solid #999; fill: none; stroke: #333; pointer-events: none; }
.props .pick input { flex: 1; min-width: 0; padding: 0 2px; }
.browse { width: 17px; flex: none; background: #e1e1e1; border: 1px solid #adadad; }
.place { display: block; width: 97px; height: 17px; margin: 0 auto; background: #e1e1e1; border: 1px solid #adadad; }

/* Status bar */
.status {
    display: grid;
    grid-template-columns: 57px 88px 88px 88px 88px 173px 118px 39px 62px 54px 85px 66px 108px 45px 200px 1fr;
    height: 20px;
    border-top: 1px solid #a5adbc;
    font-size: 12px;
    line-height: 20px;
    text-align: center;
    white-space: nowrap;
}

.status > * { border-right: 1px solid #a5adbc; }
.status .on { background: #e2f2fb; font-weight: 700; }
.status .layer { display: flex; align-items: center; gap: 2px; padding-left: 3px; }
.swatch { width: 14px; height: 14px; background: #f00; border: 1px solid #000; }
.status .memory { padding-left: 3px; text-align: left; }

/* Windows taskbar */
.taskbar {
    display: flex;
    height: 40px;
    background: #d6d6d6;
    font-family: "Noto Sans", sans-serif;
}

.start { display: grid; place-items: center; width: 48px; }
.start svg { width: 17px; height: 17px; }

.search {
    display: flex;
    align-items: center;
    gap: 11px;
    width: 343px;
    padding-left: 12px;
    background: #fff;
    border: 1px solid #c8c8c8;
}

.search svg { width: 16px; height: 18px; fill: none; stroke: #111; }
.search input { flex: 1; min-width: 0; padding: 0; border: 0; outline: 0; font-family: Roboto, sans-serif; font-size: 14px; }
.search input::placeholder { color: #333; opacity: 1; }
.apps { display: flex; }
.apps button { display: grid; place-items: center; width: 49px; border-bottom: 3px solid transparent; }
.apps svg { width: 24px; height: 24px; }
.apps .running { border-image: linear-gradient(90deg, transparent 4px, #0078d7 4px, #0078d7 45px, transparent 45px) 3; }
.apps .current { background: #f0f0f0; border-image: none; border-color: #0078d7; }

.tray { display: flex; align-items: center; margin-left: auto; font-family: Roboto, sans-serif; }
.tray button { display: grid; place-items: center; width: 24px; height: 40px; }
.tray svg { width: 16px; height: 16px; fill: none; stroke: #111; }
.tray .weather { display: flex; align-items: center; gap: 6px; width: 76px; font-size: 14px; }
.weather svg { width: 28px; height: 28px; stroke: none; }
.tray .keyboard { width: 30px; }
.tray .keyboard svg { width: 24px; height: 14px; }
.clock { display: flex; flex-direction: column; width: 74px; font-size: 12px; line-height: 18px; text-align: center; }
.tray .notify { width: 47px; margin-right: 3px; border-right: 1px solid #aaa; }
.notify svg { width: 26px; height: 26px; }
.taskbar text { font-family: "Liberation Sans", sans-serif; font-weight: 700; stroke: none; }
.ps, .ac { fill: #fff; font-size: 11px; }
.office { fill: #fff; font-size: 12px; }
.cad { fill: #fff; font-size: 5px; }
.badge { fill: #fff; font-size: 9px; }
.count { fill: #111; font-size: 12px; }
```
